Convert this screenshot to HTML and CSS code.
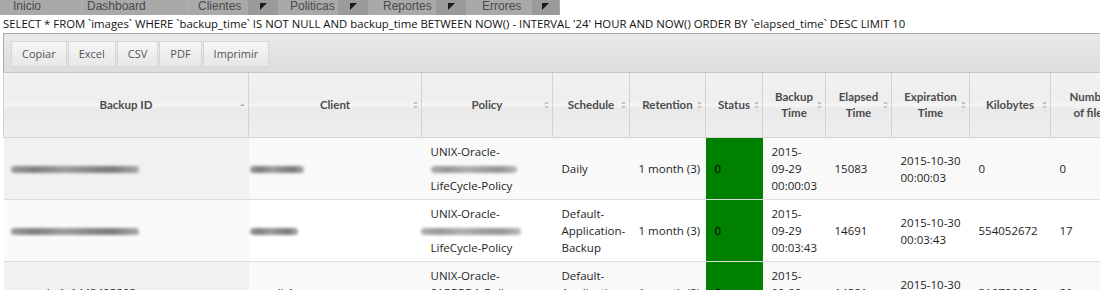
FILE: index.html
```html
<!DOCTYPE html>
<html lang="es">
<head>
<meta charset="utf-8">
<title>Backups</title>
<link rel="stylesheet" href="styles.css">
</head>
<body>
<nav class="topnav">
  <div class="nav-item nav-inicio">Inicio</div>
  <div class="nav-item nav-dash">Dashboard</div>
  <div class="nav-item nav-cli">Clientes</div>
  <div class="nav-caret"><svg width="7" height="7" viewBox="0 0 7 7"><polygon points="0,0 7,0 0,7" fill="#1a1a1a"/></svg></div>
  <div class="nav-item nav-pol">Politicas</div>
  <div class="nav-caret"><svg width="7" height="7" viewBox="0 0 7 7"><polygon points="0,0 7,0 0,7" fill="#1a1a1a"/></svg></div>
  <div class="nav-item nav-rep">Reportes</div>
  <div class="nav-caret"><svg width="7" height="7" viewBox="0 0 7 7"><polygon points="0,0 7,0 0,7" fill="#1a1a1a"/></svg></div>
  <div class="nav-item nav-err">Errores</div>
  <div class="nav-caret nav-caret-last"><svg width="7" height="7" viewBox="0 0 7 7"><polygon points="0,0 7,0 0,7" fill="#1a1a1a"/></svg></div>
</nav>
<div class="sql">SELECT * FROM `images` WHERE `backup_time` IS NOT NULL AND backup_time BETWEEN NOW() - INTERVAL '24' HOUR AND NOW() ORDER BY `elapsed_time` DESC LIMIT 10</div>
<div class="wrapper">
  <div class="toolbar">
    <a class="btn">Copiar</a>
    <a class="btn">Excel</a>
    <a class="btn">CSV</a>
    <a class="btn">PDF</a>
    <a class="btn">Imprimir</a>
  </div>
  <table class="grid">
    <colgroup>
      <col class="c-id"><col class="c-client"><col class="c-policy"><col class="c-sched"><col class="c-ret"><col class="c-status"><col class="c-btime"><col class="c-elapsed"><col class="c-exp"><col class="c-kb"><col class="c-files">
    </colgroup>
    <thead>
      <tr>
        <th><div class="th-in"><span class="lbl">Backup ID</span><span class="sort"><svg width="5" height="8" viewBox="0 0 5 8"><polygon points="0,5 5,5 2.5,2.5" fill="#b5b5b5"/></svg></span></div></th>
        <th><div class="th-in"><span class="lbl">Client</span><span class="sort"><svg width="5" height="8" viewBox="0 0 5 8"><polygon points="0,3 5,3 2.5,0.5" fill="#c2c2c2"/><polygon points="0,5 5,5 2.5,7.5" fill="#c2c2c2"/></svg></span></div></th>
        <th><div class="th-in"><span class="lbl">Policy</span><span class="sort"><svg width="5" height="8" viewBox="0 0 5 8"><polygon points="0,3 5,3 2.5,0.5" fill="#c2c2c2"/><polygon points="0,5 5,5 2.5,7.5" fill="#c2c2c2"/></svg></span></div></th>
        <th><div class="th-in"><span class="lbl">Schedule</span><span class="sort"><svg width="5" height="8" viewBox="0 0 5 8"><polygon points="0,3 5,3 2.5,0.5" fill="#c2c2c2"/><polygon points="0,5 5,5 2.5,7.5" fill="#c2c2c2"/></svg></span></div></th>
        <th><div class="th-in"><span class="lbl">Retention</span><span class="sort"><svg width="5" height="8" viewBox="0 0 5 8"><polygon points="0,3 5,3 2.5,0.5" fill="#c2c2c2"/><polygon points="0,5 5,5 2.5,7.5" fill="#c2c2c2"/></svg></span></div></th>
        <th><div class="th-in"><span class="lbl">Status</span><span class="sort"><svg width="5" height="8" viewBox="0 0 5 8"><polygon points="0,3 5,3 2.5,0.5" fill="#c2c2c2"/><polygon points="0,5 5,5 2.5,7.5" fill="#c2c2c2"/></svg></span></div></th>
        <th><div class="th-in"><span class="lbl">Backup<br>Time</span><span class="sort"><svg width="5" height="8" viewBox="0 0 5 8"><polygon points="0,3 5,3 2.5,0.5" fill="#c2c2c2"/><polygon points="0,5 5,5 2.5,7.5" fill="#c2c2c2"/></svg></span></div></th>
        <th><div class="th-in"><span class="lbl">Elapsed<br>Time</span><span class="sort"><svg width="5" height="8" viewBox="0 0 5 8"><polygon points="0,3 5,3 2.5,0.5" fill="#c2c2c2"/><polygon points="0,5 5,5 2.5,7.5" fill="#c2c2c2"/></svg></span></div></th>
        <th><div class="th-in"><span class="lbl">Expiration<br>Time</span><span class="sort"><svg width="5" height="8" viewBox="0 0 5 8"><polygon points="0,3 5,3 2.5,0.5" fill="#c2c2c2"/><polygon points="0,5 5,5 2.5,7.5" fill="#c2c2c2"/></svg></span></div></th>
        <th><div class="th-in"><span class="lbl">Kilobytes</span><span class="sort"><svg width="5" height="8" viewBox="0 0 5 8"><polygon points="0,3 5,3 2.5,0.5" fill="#c2c2c2"/><polygon points="0,5 5,5 2.5,7.5" fill="#c2c2c2"/></svg></span></div></th>
        <th><div class="th-in"><span class="lbl">Number<br>of files</span><span class="sort"><svg width="5" height="8" viewBox="0 0 5 8"><polygon points="0,3 5,3 2.5,0.5" fill="#c2c2c2"/><polygon points="0,5 5,5 2.5,7.5" fill="#c2c2c2"/></svg></span></div></th>
      </tr>
    </thead>
    <tbody>
      <tr class="odd">
        <td class="sorted"><span class="smudge smudge-id"></span></td>
        <td><span class="smudge smudge-client"></span></td>
        <td>UNIX-Oracle-<br><span class="smudge smudge-pol"></span><br>LifeCycle-Policy</td>
        <td>Daily</td>
        <td>1 month (3)</td>
        <td class="ok">0</td>
        <td>2015-<br>09-29<br>00:00:03</td>
        <td>15083</td>
        <td>2015-10-30<br>00:00:03</td>
        <td>0</td>
        <td>0</td>
      </tr>
      <tr class="even">
        <td class="sorted"><span class="smudge smudge-id"></span></td>
        <td><span class="smudge smudge-client short"></span></td>
        <td>UNIX-Oracle-<br><span class="smudge smudge-pol wide"></span><br>LifeCycle-Policy</td>
        <td>Default-<br>Application-<br>Backup</td>
        <td>1 month (3)</td>
        <td class="ok">0</td>
        <td>2015-<br>09-29<br>00:03:43</td>
        <td>14691</td>
        <td>2015-10-30<br>00:03:43</td>
        <td>554052672</td>
        <td>17</td>
      </tr>
      <tr class="odd">
        <td class="sorted">mcorab_1_1443495293</td>
        <td>srvdb1</td>
        <td>UNIX-Oracle-<br>SAPPRDA-Policy<br>LifeCycle-Policy</td>
        <td>Default-<br>Application-<br>Backup</td>
        <td>1 month (3)</td>
        <td class="ok">0</td>
        <td>2015-<br>09-29<br>00:03:52</td>
        <td>14581</td>
        <td>2015-10-30<br>00:03:52</td>
        <td>310720096</td>
        <td>20</td>
      </tr>
    </tbody>
  </table>
</div>
</body>
</html>
```
FILE: styles.css
```css
html, body {
  margin: 0;
  padding: 0;
  overflow: hidden;
  background: #ffffff;
}
body {
  width: 1100px;
  height: 290px;
}
.topnav {
  display: flex;
  width: 560px;
  height: 15px;
  background: #a9a9a9;
  font-family: "Liberation Sans", Arial, sans-serif;
  font-size: 12px;
  line-height: 13px;
  color: #4a4a4a;
}
.nav-item {
  box-sizing: border-box;
  height: 15px;
  border-right: 1px solid #b4b4b4;
}
.nav-inicio { width: 82px; padding-left: 13px; }
.nav-dash { width: 106px; padding-left: 5px; }
.nav-cli { width: 60px; padding-left: 10px; border-right: 0; }
.nav-pol { width: 60px; padding-left: 12px; border-right: 0; }
.nav-rep { width: 68px; padding-left: 15px; border-right: 0; }
.nav-err { width: 66px; padding-left: 16px; border-right: 0; }
.nav-caret {
  width: 30px;
  height: 15px;
  background: #9a9a9a;
  display: flex;
  justify-content: center;
  padding-top: 3px;
  box-sizing: border-box;
}
.nav-caret-last { width: 27px; }
.sql {
  font-family: "Open Sans", "Liberation Sans", sans-serif;
  font-size: 11.35px;
  line-height: 18px;
  height: 18px;
  padding-left: 3px;
  color: #111;
  white-space: nowrap;
}
.wrapper {
  margin-left: 3px;
  width: 1200px;
}
.toolbar {
  display: flex;
  gap: 1px;
  height: 40px;
  box-sizing: border-box;
  padding: 7px 7px 0 7px;
  border: 1px solid #aaaaaa;
  border-bottom: 1px solid #c8c8c8;
  background: linear-gradient(#e9e9e9, #e2e2e2 60%, #dddddd);
}
.btn {
  display: block;
  box-sizing: border-box;
  height: 26px;
  line-height: 24px;
  padding: 0 10px;
  border: 1px solid #d6d6d6;
  background: linear-gradient(#f6f6f6, #eeeeee 50%, #e8e8e8);
  font-family: "Open Sans", sans-serif;
  font-size: 11px;
  color: #555;
}
.grid {
  border-collapse: collapse;
  table-layout: fixed;
  width: 1127px;
  font-family: "Open Sans", sans-serif;
  font-size: 11.5px;
  color: #1e1e1e;
}
.c-id { width: 245px; }
.c-client { width: 173px; }
.c-policy { width: 131px; }
.c-sched { width: 77px; }
.c-ret { width: 76px; }
.c-status { width: 57px; }
.c-btime { width: 63px; }
.c-elapsed { width: 66px; }
.c-exp { width: 78px; }
.c-kb { width: 81px; }
.c-files { width: 80px; }
.grid th {
  height: 64px;
  padding: 0 3px 0 12px;
  border: 1px solid #d3d3d3;
  border-top: 0;
  background: linear-gradient(#f1f1f1 0%, #eeeeee 44%, #f5f5f5 50%, #e9e9e9 56%, #efefef 100%);
  font-family: "Lato", sans-serif;
  font-weight: bold;
  font-size: 11.5px;
  line-height: 16px;
  color: #4c4c4c;
}
.th-in {
  display: flex;
  align-items: center;
}
.lbl {
  flex: 1;
  text-align: center;
  white-space: nowrap;
}
.sort {
  width: 5px;
  margin-left: 4px;
  display: flex;
}
.grid td {
  padding: 5px 9px;
  line-height: 17px;
  border-top: 1px solid #dddddd;
  vertical-align: middle;
  white-space: nowrap;
  background: #ffffff;
}
.grid tr.odd td { background: #f9f9f9; }
.grid tr.odd td.sorted { background: #f1f1f1; }
.grid tr.even td.sorted { background: #fafafa; }
.grid tr td.ok { background: #008000; color: #000; }
.smudge {
  display: inline-block;
  height: 7px;
  border-radius: 4px;
  background: linear-gradient(90deg, #9a9a9a 0%, #7e7e7e 18%, #9c9c9c 42%, #868686 62%, #7a7a7a 80%, #a8a8a8 100%);
  filter: blur(1.8px);
  vertical-align: middle;
}
.smudge-id { width: 128px; margin-left: -2px; }
.smudge-client { width: 54px; margin-left: -8px; }
.smudge-client.short { width: 48px; }
.smudge-pol { width: 86px; opacity: 0.8; }
.smudge-pol.wide { width: 100px; margin-left: -10px; }
```
